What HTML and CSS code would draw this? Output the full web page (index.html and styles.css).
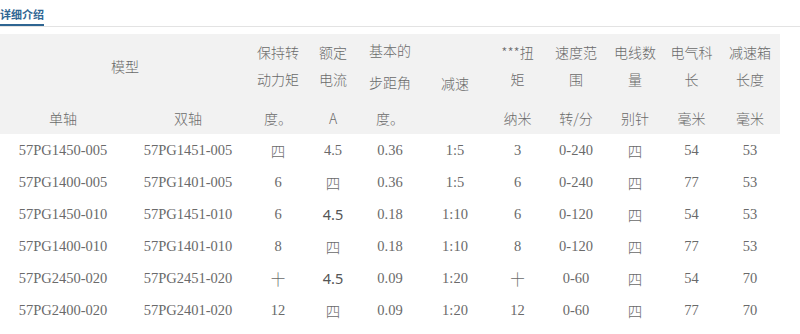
FILE: index.html
```html
<html>
<head>
	<title>详细介绍</title>
	<link rel="stylesheet" href="styles.css">
</head>
<body>
	<div class="tabs">
		<span class="tab">详细介绍</span>
	</div>

	<table class="spec">
		<colgroup>
			<col class="c1"><col class="c2"><col class="c3"><col class="c4"><col class="c5"><col class="c6">
			<col class="c7"><col class="c8"><col class="c9"><col class="c10"><col class="c11">
		</colgroup>
		<!----- header ----->
		<tr class="head1">
			<td colspan="2">模型</td>
			<td>保持转<br>动力矩</td>
			<td>额定<br>电流</td>
			<td class="wide">基本的<br>步距角</td>
			<td rowspan="2">减速</td>
			<td>***扭<br>矩</td>
			<td>速度范<br>围</td>
			<td>电线数<br>量</td>
			<td>电气科<br>长</td>
			<td>减速箱<br>长度</td>
		</tr>
		<tr class="head2">
			<td>单轴</td>
			<td>双轴</td>
			<td>度。</td>
			<td>A</td>
			<td>度。</td>
			<td>纳米</td>
			<td>转/分</td>
			<td>别针</td>
			<td>毫米</td>
			<td>毫米</td>
		</tr>
		<!----- rows ----->
		<tr><td>57PG1450-005</td><td>57PG1451-005</td><td>四</td><td>4.5</td><td>0.36</td><td>1:5</td><td>3</td><td>0-240</td><td>四</td><td>54</td><td>53</td></tr>
		<tr><td>57PG1400-005</td><td>57PG1401-005</td><td>6</td><td>四</td><td>0.36</td><td>1:5</td><td>6</td><td>0-240</td><td>四</td><td>77</td><td>53</td></tr>
		<tr><td>57PG1450-010</td><td>57PG1451-010</td><td>6</td><td class="sans">4.5</td><td>0.18</td><td>1:10</td><td>6</td><td>0-120</td><td>四</td><td>54</td><td>53</td></tr>
		<tr><td>57PG1400-010</td><td>57PG1401-010</td><td>8</td><td>四</td><td>0.18</td><td>1:10</td><td>8</td><td>0-120</td><td>四</td><td>77</td><td>53</td></tr>
		<tr><td>57PG2450-020</td><td>57PG2451-020</td><td>十</td><td class="sans">4.5</td><td>0.09</td><td>1:20</td><td>十</td><td>0-60</td><td>四</td><td>54</td><td>70</td></tr>
		<tr><td>57PG2400-020</td><td>57PG2401-020</td><td>12</td><td>四</td><td>0.09</td><td>1:20</td><td>12</td><td>0-60</td><td>四</td><td>77</td><td>70</td></tr>
	</table>
</body>
</html>
```

FILE: styles.css
```css
body {
	margin: 0;
	background: #fff;
	font-family: "Liberation Serif", "Noto Sans CJK SC", serif;
	color: #666;
}
.tabs {
	border-bottom: 1px solid #e3e3e3;
	height: 26px;
	margin-bottom: 7px;
}
.tab {
	display: inline-block;
	height: 24px;
	line-height: 28px;
	border-bottom: 2px solid #2e6592;
	color: #2e6592;
	font-family: "Noto Sans CJK SC", sans-serif;
	font-weight: bold;
	font-size: 11px;
}
table.spec {
	width: 780px;
	table-layout: fixed;
	border-collapse: collapse;
	font-size: 14.5px;
	font-weight: 300;
	color: #6a6a6a;
}
.spec td {
	padding: 0;
	text-align: center;
	vertical-align: middle;
	height: 32px;
}
.c1 { width: 126px; }
.c2 { width: 124px; }
.c3 { width: 56px; }
.c4 { width: 54px; }
.c5 { width: 60px; }
.c6 { width: 70px; }
.c7 { width: 55px; }
.c8 { width: 62px; }
.c9 { width: 56px; }
.c10 { width: 57px; }
.c11 { width: 60px; }

.head1 td, .head2 td {
	background: #f2f2f2;
	font-family: "Noto Sans CJK SC", sans-serif;
	font-size: 14px;
}
.head1 td {
	height: 61px;
	line-height: 27px;
	padding-bottom: 2px;
}
.head1 td.wide {
	line-height: 32px;
}
.head2 td {
	height: 34px;
	padding-top: 2px;
}
.sans {
	font-family: "Noto Sans", sans-serif;
	font-weight: 400;
	color: #555;
}
```
